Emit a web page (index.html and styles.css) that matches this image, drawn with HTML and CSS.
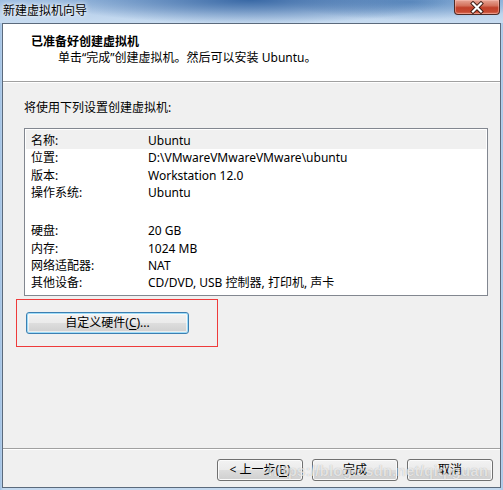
FILE: index.html
```html
<!DOCTYPE html>
<html lang="zh-CN">
<head>
<meta charset="utf-8">
<title>新建虚拟机向导</title>
<link rel="stylesheet" href="styles.css">
</head>
<body>
<div class="window">
  <div class="titlebar">
    <span class="title">新建虚拟机向导</span>
    <div class="close">
      <svg width="46" height="15" viewBox="0 0 46 15">
        <path d="M19 3.5 L27 11.5 M27 3.5 L19 11.5" stroke="#3a1a14" stroke-width="4" stroke-linecap="square"/>
        <path d="M19 3.5 L27 11.5 M27 3.5 L19 11.5" stroke="#ffffff" stroke-width="2.2" stroke-linecap="square"/>
      </svg>
    </div>
  </div>
  <div class="client">
    <div class="header">
      <div class="h-title">已准备好创建虚拟机</div>
      <div class="h-sub">单击“完成”创建虚拟机。然后可以安装 Ubuntu。</div>
    </div>
    <div class="content">
      <div class="intro">将使用下列设置创建虚拟机:</div>
      <div class="list">
        <div class="row first"><span class="k">名称:</span><span class="v">Ubuntu</span></div>
        <div class="row"><span class="k">位置:</span><span class="v">D:\VMwareVMwareVMware\ubuntu</span></div>
        <div class="row"><span class="k">版本:</span><span class="v">Workstation 12.0</span></div>
        <div class="row"><span class="k">操作系统:</span><span class="v">Ubuntu</span></div>
        <div class="spacer"></div>
        <div class="row"><span class="k">硬盘:</span><span class="v">20 GB</span></div>
        <div class="row"><span class="k">内存:</span><span class="v">1024 MB</span></div>
        <div class="row"><span class="k">网络适配器:</span><span class="v">NAT</span></div>
        <div class="row"><span class="k">其他设备:</span><span class="v">CD/DVD, USB 控制器, 打印机, 声卡</span></div>
      </div>
      <div class="mark">
        <button class="btn focus custom">自定义硬件(<u>C</u>)...</button>
      </div>
    </div>
    <div class="footer">
      <button class="btn">&lt; 上一步(<u>B</u>)</button>
      <button class="btn">完成</button>
      <button class="btn">取消</button>
      <span class="watermark">https://blog.csdn.net/qiqiguan</span>
    </div>
  </div>
</div>
</body>
</html>
```

FILE: styles.css
```css
html, body {
  margin: 0;
  padding: 0;
}
body {
  width: 503px;
  height: 490px;
  overflow: hidden;
  font-family: "Noto Sans", "Noto Sans CJK SC", sans-serif;
  font-size: 12px;
  color: #000;
}
.window {
  width: 503px;
  height: 490px;
  box-sizing: border-box;
  display: flex;
  flex-direction: column;
  background:
    linear-gradient(to right, #9fc0e3 0px, #c4d9ef 3px, #c4d9ef 499px, #a9c7e6 503px);
}
.titlebar {
  height: 23px;
  flex: none;
  display: flex;
  align-items: flex-start;
  padding: 0 3px 0 3px;
  background:
    radial-gradient(ellipse 200px 24px at 250px 0px, rgba(52,100,162,0.95), rgba(52,100,162,0) 100%),
    radial-gradient(ellipse 120px 18px at 410px 2px, rgba(70,122,180,0.7), rgba(70,122,180,0) 100%),
    linear-gradient(to bottom, #9dbde1 0%, #bcd3ec 60%, #c8dcf1 100%);
}
.title {
  line-height: 21px;
  font-size: 12px;
  color: #000;
  text-shadow: 0 0 6px rgba(255,255,255,0.95), 0 0 3px rgba(255,255,255,0.9);
}
.close {
  margin-left: auto;
  width: 44px;
  height: 14px;
  border: 1px solid #4e2a25;
  border-top: none;
  border-radius: 0 0 4px 4px;
  background: linear-gradient(to bottom, #e7a596 0%, #d4725d 40%, #c0402a 55%, #c84a32 85%, #e0806a 100%);
  box-shadow: inset 0 0 0 1px rgba(255,200,190,0.45);
}
.close svg {
  display: block;
  margin-left: -1px;
}
.client {
  flex: 1;
  margin: 0 2px 2px 2px;
  border: 1px solid #5b6a7c;
  background: #f0f0f0;
  display: flex;
  flex-direction: column;
  position: relative;
}
.header {
  height: 57px;
  flex: none;
  background: #fff;
  border-bottom: 1px solid #a0a0a0;
  box-sizing: content-box;
  padding: 0;
}
.h-title {
  font-family: "Noto Sans CJK SC", sans-serif;
  font-weight: bold;
  line-height: 16px;
  padding: 9px 0 0 28px;
}
.h-sub {
  line-height: 16px;
  padding: 1px 0 0 55px;
}
.content {
  flex: 1;
  border-top: 1px solid #fff;
  padding: 17px 0 0 0;
}
.intro {
  line-height: 16px;
  padding-left: 21px;
}
.list {
  margin: 12px 0 0 21px;
  width: 464px;
  height: 168px;
  box-sizing: border-box;
  border: 1px solid #828790;
  background: #fff;
  padding: 1px 1px 0 1px;
}
.row {
  display: flex;
  height: 17.33px;
  line-height: 17.33px;
  padding-left: 5px;
}
.row.first {
  height: 19.33px;
  padding-top: 2px;
  box-sizing: border-box;
  line-height: 17.33px;
  background: #f0f0f0;
}
.k {
  width: 117px;
  flex: none;
}
.spacer {
  height: 21px;
}
.mark {
  margin: 3px 0 0 13px;
  width: 202px;
  height: 48px;
  box-sizing: border-box;
  border: 1px solid #ee3b3b;
  padding: 12px 0 0 9px;
}
.btn {
  font-family: "Noto Sans", "Noto Sans CJK SC", sans-serif;
  font-size: 12px;
  color: #000;
  height: 22px;
  width: 86px;
  padding: 0;
  line-height: 20px;
  border: 1px solid #707070;
  border-radius: 3px;
  background: linear-gradient(to bottom, #f2f2f2 0%, #ebebeb 48%, #dddddd 52%, #cfcfcf 100%);
  box-shadow: inset 0 0 0 1px #fbfbfb;
}
.btn u {
  text-decoration: underline;
  text-underline-offset: 2px;
}
.btn.custom {
  width: 163px;
  display: block;
}
.btn.focus {
  border-color: #3c7fb1;
  box-shadow: inset 0 0 0 1px #9fdcf8, inset 0 0 0 2px rgba(255,255,255,0.6);
}
.footer {
  flex: none;
  height: 39px;
  border-top: 1px solid #a0a0a0;
  box-shadow: inset 0 1px 0 #fff;
  display: flex;
  justify-content: flex-end;
  align-items: flex-start;
  gap: 9px;
  padding: 10px 7px 0 0;
  box-sizing: border-box;
  position: relative;
}
.watermark {
  position: absolute;
  left: 265px;
  top: 13px;
  font-family: "Liberation Sans", sans-serif;
  font-weight: bold;
  font-size: 15px;
  letter-spacing: 0.2px;
  color: rgba(255,255,255,0.7);
  text-shadow: 0 0 1px rgba(0,0,0,0.28);
  pointer-events: none;
  white-space: nowrap;
}
```
